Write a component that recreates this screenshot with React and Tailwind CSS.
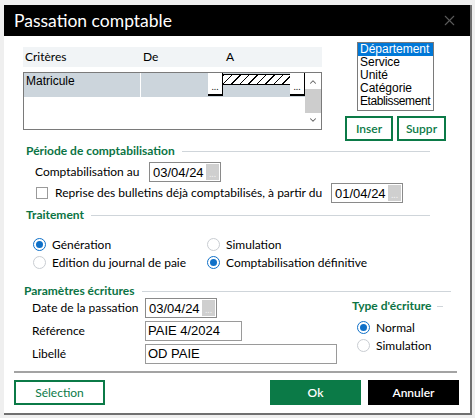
import { X, ChevronUp, ChevronDown } from 'lucide-react';

const ui = { fontFamily: 'Lato, "Noto Sans", sans-serif' };
const classic = { fontFamily: '"Liberation Sans", Arial, sans-serif' };

function DateBox({ value, className = '' }) {
  return (
    <div className={`flex h-[20px] w-[72px] items-center border border-[#8a8a8a] bg-white pl-[3px] ${className}`}>
      <span className="flex-1 text-[13px] leading-none text-black" style={classic}>{value}</span>
      <span className="mr-[1px] flex h-[16px] w-[13px] items-end justify-center bg-[#cfcfcf] pb-[2px] text-[9px] leading-none text-[#f4f4f4]">...</span>
    </div>
  );
}

function Radio({ checked, label, className = '' }) {
  return (
    <div className={`flex h-[13px] items-center gap-[6px] whitespace-nowrap ${className}`}>
      <span
        className={`flex h-[13px] w-[13px] items-center justify-center rounded-full border ${
          checked ? 'border-[#0f70c8]' : 'border-[#c9cdd2]'
        } bg-white`}
      >
        {checked && <span className="h-[7px] w-[7px] rounded-full bg-[#0f70c8]" />}
      </span>
      <span className="text-[12px] leading-none text-black" style={ui}>{label}</span>
    </div>
  );
}

function Heading({ children, lineEnd }) {
  return (
    <div className="flex h-[16px] items-center whitespace-nowrap" style={{ width: lineEnd }}>
      <span className="text-[12px] font-bold leading-none text-[#0b7444]" style={ui}>{children}</span>
      <span className="ml-[7px] h-px flex-1 bg-[#cfd5da]" />
    </div>
  );
}

function DotsButton() {
  return (
    <span className="flex h-[23px] w-[15px] items-end justify-center border-b-2 border-r border-b-black border-r-black bg-white pb-[3px] text-[9px] leading-none text-black">
      ...
    </span>
  );
}

export default function App() {
  return (
    <div className="h-[418px] w-[475px] bg-[#efefef] pl-[4px] pt-[5px]">
      <div className="flex h-[410px] w-[468px] flex-col border-b-2 border-r-2 border-[#707070] bg-white">
        {/* Title bar */}
        <div className="flex h-[31px] items-center justify-between bg-black pl-[10px] pr-[12px]">
          <span className="text-[17.5px] leading-none text-white" style={ui}>Passation comptable</span>
          <X className="h-[17px] w-[17px] text-[#5a5a5a]" strokeWidth={1.5} />
        </div>

        {/* Criteria grid + list */}
        <div className="flex">
          <div className="ml-[19px] mt-[11px] w-[299px]">
            <div className="flex h-[20px] items-center bg-[#f1f4f6] text-[12px] text-black" style={ui}>
              <span className="w-[120px] pl-[2px]">Critères</span>
              <span className="w-[83px]">De</span>
              <span>A</span>
            </div>
            <div className="mt-[5px] flex h-[58px] border border-[#7a7a7a]">
              <div className="flex-1">
                <div className="flex h-[24px] bg-[#ccd5dc]">
                  <span className="w-[117px] border-r border-white pl-[2px] pt-[2px] text-[12px] leading-none text-black" style={classic}>
                    Matricule
                  </span>
                  <span className="flex-1" />
                  <DotsButton />
                  <span className="mt-[1px] h-[11px] w-[67px] border-y border-black bg-[repeating-linear-gradient(135deg,#000_0_1px,#fff_1px_6px)]" />
                  <DotsButton />
                </div>
              </div>
              <div className="flex w-[16px] flex-col items-center justify-between bg-white">
                <ChevronUp className="mt-[4px] h-[10px] w-[10px] text-[#606060]" strokeWidth={2.5} />
                <span className="h-[24px] w-full bg-[#cdcdcd]" />
                <ChevronDown className="mb-[4px] h-[10px] w-[10px] text-[#606060]" strokeWidth={2.5} />
              </div>
            </div>
          </div>

          <div className="ml-[23px] mt-[6px] flex flex-col">
            <div className="ml-[12px] flex h-[69px] w-[77px] flex-col whitespace-nowrap border border-[#7a7a7a] text-[12px] leading-[13px] text-black" style={classic}>
              <span className="bg-[#0078d7] pl-[2px] text-white">Département</span>
              <span className="pl-[2px]">Service</span>
              <span className="pl-[2px]">Unité</span>
              <span className="pl-[2px]">Catégorie</span>
              <span className="pl-[2px] tracking-[-0.4px]">Etablissement</span>
            </div>
            <div className="mt-[5px] flex gap-[4px]">
              <button className="h-[25px] w-[48px] border-2 border-[#0b7a47] text-[12px] font-semibold text-[#0b7a47]" style={ui}>Inser</button>
              <button className="h-[25px] w-[49px] border-2 border-[#0b7a47] text-[12px] font-semibold text-[#0b7a47]" style={ui}>Suppr</button>
            </div>
          </div>
        </div>

        {/* Période de comptabilisation */}
        <div className="ml-[22px] mt-[2px]">
          <Heading lineEnd={404}>Période de comptabilisation</Heading>
          <div className="mt-[3px] flex h-[20px] items-center whitespace-nowrap">
            <span className="w-[123px] pl-[9px] text-[12px] text-black" style={ui}>Comptabilisation au</span>
            <DateBox value="03/04/24" />
          </div>
          <div className="mt-[1px] flex h-[20px] items-center whitespace-nowrap">
            <span className="ml-[10px] h-[12px] w-[12px] border border-[#9a9a9a] bg-white" />
            <span className="ml-[7px] w-[276px] text-[12px] text-black" style={ui}>
              Reprise des bulletins déjà comptabilisés, à partir du
            </span>
            <DateBox value="01/04/24" />
          </div>
        </div>

        {/* Traitement */}
        <div className="ml-[22px] mt-[4px]">
          <Heading lineEnd={404}>Traitement</Heading>
          <div className="mt-[15px] grid w-[340px] grid-cols-[174px_1fr] gap-y-[5px] pl-[7px]">
            <Radio checked label="Génération" />
            <Radio label="Simulation" />
            <Radio label="Edition du journal de paie" />
            <Radio checked label="Comptabilisation définitive" />
          </div>
        </div>

        {/* Paramètres écritures */}
        <div className="ml-[20px] mt-[14px]">
          <Heading lineEnd={427}>Paramètres écritures</Heading>
          <div className="flex">
            <div className="-mt-[1px] flex flex-col gap-[3px] pl-[8px]">
              <div className="flex h-[20px] items-center whitespace-nowrap">
                <span className="w-[113px] text-[12px] text-black" style={ui}>Date de la passation</span>
                <DateBox value="03/04/24" />
              </div>
              <div className="flex h-[20px] items-center">
                <span className="w-[113px] text-[12px] text-black" style={ui}>Référence</span>
                <span className="flex h-[20px] w-[97px] items-center border border-[#9a9a9a] pl-[2px] text-[13px] text-black" style={classic}>PAIE 4/2024</span>
              </div>
              <div className="flex h-[20px] items-center">
                <span className="w-[113px] text-[12px] text-black" style={ui}>Libellé</span>
                <span className="flex h-[20px] w-[192px] items-center border border-[#9a9a9a] pl-[2px] text-[13px] text-black" style={classic}>OD PAIE</span>
              </div>
            </div>
            <div className="ml-[15px] flex flex-col pt-[1px]">
              <div className="flex items-center whitespace-nowrap">
                <span className="text-[12px] font-bold leading-none text-[#0b7444]" style={ui}>Type d'écriture</span>
                <span className="ml-[6px] h-px w-[6px] bg-[#cfd5da]" />
              </div>
              <Radio checked label="Normal" className="ml-[5px] mt-[9px]" />
              <Radio label="Simulation" className="ml-[5px] mt-[5px]" />
            </div>
          </div>
        </div>

        {/* Separator */}
        <div className="ml-[10px] mt-[7px] h-[2px] w-[443px] bg-[#a3a3a3]" />

        {/* Buttons */}
        <div className="ml-[10px] mt-[7px] flex w-[445px]">
          <button className="h-[25px] w-[91px] border-2 border-[#0b7a47] text-[12px] text-[#0b7a47]" style={ui}>Sélection</button>
          <span className="flex-1" />
          <button className="h-[25px] w-[91px] bg-[#0b7a47] text-[12px] font-semibold text-white" style={ui}>Ok</button>
          <button className="ml-[7px] h-[25px] w-[91px] bg-black text-[12px] font-semibold text-white" style={ui}>Annuler</button>
        </div>
      </div>
    </div>
  );
}
